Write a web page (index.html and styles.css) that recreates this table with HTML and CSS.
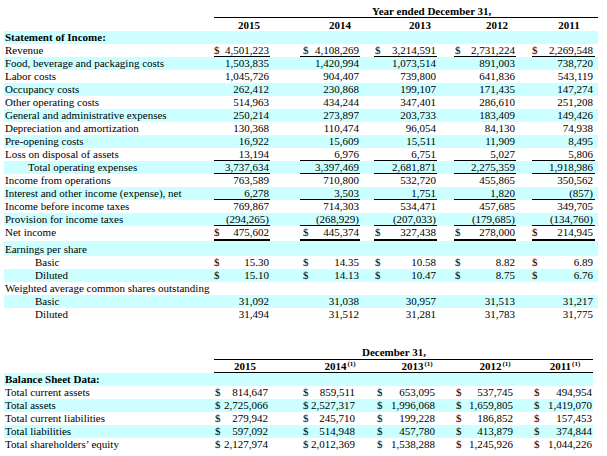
FILE: index.html
```html
<!DOCTYPE html>
<html lang="en">
<head>
<meta charset="utf-8">
<title>Selected Financial Data</title>
<link rel="stylesheet" href="styles.css">
</head>
<body>
<div class="page">
  <section class="t1">
    <div class="hrow title"><div></div><div class="hx">Year ended December 31,</div></div>
    <div class="hrow years"><div></div>
      <div class="hy">
        <div class="y1">2015</div><div class="y2">2014</div><div class="y3">2013</div><div class="y4">2012</div><div class="y5">2011</div>
      </div>
    </div>
    <div class="row alt"><div class="lbl b">Statement of Income:</div></div>
    <div class="row u"><div class="lbl">Revenue</div>
      <div class="v c1"><span>$</span><span>4,501,223</span></div>
      <div class="v c2"><span>$</span><span>4,108,269</span></div>
      <div class="v c3"><span>$</span><span>3,214,591</span></div>
      <div class="v c4"><span>$</span><span>2,731,224</span></div>
      <div class="v c5"><span>$</span><span>2,269,548</span></div>
    </div>
    <div class="row alt"><div class="lbl">Food, beverage and packaging costs</div>
      <div class="v c1"><span></span><span>1,503,835</span></div>
      <div class="v c2"><span></span><span>1,420,994</span></div>
      <div class="v c3"><span></span><span>1,073,514</span></div>
      <div class="v c4"><span></span><span>891,003</span></div>
      <div class="v c5"><span></span><span>738,720</span></div>
    </div>
    <div class="row"><div class="lbl">Labor costs</div>
      <div class="v c1"><span></span><span>1,045,726</span></div>
      <div class="v c2"><span></span><span>904,407</span></div>
      <div class="v c3"><span></span><span>739,800</span></div>
      <div class="v c4"><span></span><span>641,836</span></div>
      <div class="v c5"><span></span><span>543,119</span></div>
    </div>
    <div class="row alt"><div class="lbl">Occupancy costs</div>
      <div class="v c1"><span></span><span>262,412</span></div>
      <div class="v c2"><span></span><span>230,868</span></div>
      <div class="v c3"><span></span><span>199,107</span></div>
      <div class="v c4"><span></span><span>171,435</span></div>
      <div class="v c5"><span></span><span>147,274</span></div>
    </div>
    <div class="row"><div class="lbl">Other operating costs</div>
      <div class="v c1"><span></span><span>514,963</span></div>
      <div class="v c2"><span></span><span>434,244</span></div>
      <div class="v c3"><span></span><span>347,401</span></div>
      <div class="v c4"><span></span><span>286,610</span></div>
      <div class="v c5"><span></span><span>251,208</span></div>
    </div>
    <div class="row alt"><div class="lbl">General and administrative expenses</div>
      <div class="v c1"><span></span><span>250,214</span></div>
      <div class="v c2"><span></span><span>273,897</span></div>
      <div class="v c3"><span></span><span>203,733</span></div>
      <div class="v c4"><span></span><span>183,409</span></div>
      <div class="v c5"><span></span><span>149,426</span></div>
    </div>
    <div class="row"><div class="lbl">Depreciation and amortization</div>
      <div class="v c1"><span></span><span>130,368</span></div>
      <div class="v c2"><span></span><span>110,474</span></div>
      <div class="v c3"><span></span><span>96,054</span></div>
      <div class="v c4"><span></span><span>84,130</span></div>
      <div class="v c5"><span></span><span>74,938</span></div>
    </div>
    <div class="row alt"><div class="lbl">Pre-opening costs</div>
      <div class="v c1"><span></span><span>16,922</span></div>
      <div class="v c2"><span></span><span>15,609</span></div>
      <div class="v c3"><span></span><span>15,511</span></div>
      <div class="v c4"><span></span><span>11,909</span></div>
      <div class="v c5"><span></span><span>8,495</span></div>
    </div>
    <div class="row u"><div class="lbl">Loss on disposal of assets</div>
      <div class="v c1"><span></span><span>13,194</span></div>
      <div class="v c2"><span></span><span>6,976</span></div>
      <div class="v c3"><span></span><span>6,751</span></div>
      <div class="v c4"><span></span><span>5,027</span></div>
      <div class="v c5"><span></span><span>5,806</span></div>
    </div>
    <div class="row alt u"><div class="lbl ind1">Total operating expenses</div>
      <div class="v c1"><span></span><span>3,737,634</span></div>
      <div class="v c2"><span></span><span>3,397,469</span></div>
      <div class="v c3"><span></span><span>2,681,871</span></div>
      <div class="v c4"><span></span><span>2,275,359</span></div>
      <div class="v c5"><span></span><span>1,918,986</span></div>
    </div>
    <div class="row"><div class="lbl">Income from operations</div>
      <div class="v c1"><span></span><span>763,589</span></div>
      <div class="v c2"><span></span><span>710,800</span></div>
      <div class="v c3"><span></span><span>532,720</span></div>
      <div class="v c4"><span></span><span>455,865</span></div>
      <div class="v c5"><span></span><span>350,562</span></div>
    </div>
    <div class="row alt u"><div class="lbl">Interest and other income (expense), net</div>
      <div class="v c1"><span></span><span>6,278</span></div>
      <div class="v c2"><span></span><span>3,503</span></div>
      <div class="v c3"><span></span><span>1,751</span></div>
      <div class="v c4"><span></span><span>1,820</span></div>
      <div class="v c5"><span></span><span>(857)</span></div>
    </div>
    <div class="row"><div class="lbl">Income before income taxes</div>
      <div class="v c1"><span></span><span>769,867</span></div>
      <div class="v c2"><span></span><span>714,303</span></div>
      <div class="v c3"><span></span><span>534,471</span></div>
      <div class="v c4"><span></span><span>457,685</span></div>
      <div class="v c5"><span></span><span>349,705</span></div>
    </div>
    <div class="row alt u"><div class="lbl">Provision for income taxes</div>
      <div class="v c1"><span></span><span>(294,265)</span></div>
      <div class="v c2"><span></span><span>(268,929)</span></div>
      <div class="v c3"><span></span><span>(207,033)</span></div>
      <div class="v c4"><span></span><span>(179,685)</span></div>
      <div class="v c5"><span></span><span>(134,760)</span></div>
    </div>
    <div class="row net"><div class="lbl">Net income</div>
      <div class="v c1"><span>$</span><span>475,602</span></div>
      <div class="v c2"><span>$</span><span>445,374</span></div>
      <div class="v c3"><span>$</span><span>327,438</span></div>
      <div class="v c4"><span>$</span><span>278,000</span></div>
      <div class="v c5"><span>$</span><span>214,945</span></div>
    </div>
    <div class="row alt eps"><div class="lbl">Earnings per share</div></div>
    <div class="row"><div class="lbl ind2">Basic</div>
      <div class="v c1"><span>$</span><span>15.30</span></div>
      <div class="v c2"><span>$</span><span>14.35</span></div>
      <div class="v c3"><span>$</span><span>10.58</span></div>
      <div class="v c4"><span>$</span><span>8.82</span></div>
      <div class="v c5"><span>$</span><span>6.89</span></div>
    </div>
    <div class="row alt"><div class="lbl ind2">Diluted</div>
      <div class="v c1"><span>$</span><span>15.10</span></div>
      <div class="v c2"><span>$</span><span>14.13</span></div>
      <div class="v c3"><span>$</span><span>10.47</span></div>
      <div class="v c4"><span>$</span><span>8.75</span></div>
      <div class="v c5"><span>$</span><span>6.76</span></div>
    </div>
    <div class="row"><div class="lbl">Weighted average common shares outstanding</div></div>
    <div class="row alt"><div class="lbl ind2">Basic</div>
      <div class="v c1"><span></span><span>31,092</span></div>
      <div class="v c2"><span></span><span>31,038</span></div>
      <div class="v c3"><span></span><span>30,957</span></div>
      <div class="v c4"><span></span><span>31,513</span></div>
      <div class="v c5"><span></span><span>31,217</span></div>
    </div>
    <div class="row"><div class="lbl ind2">Diluted</div>
      <div class="v c1"><span></span><span>31,494</span></div>
      <div class="v c2"><span></span><span>31,512</span></div>
      <div class="v c3"><span></span><span>31,281</span></div>
      <div class="v c4"><span></span><span>31,783</span></div>
      <div class="v c5"><span></span><span>31,775</span></div>
    </div>
  </section>

  <section class="t2">
    <div class="hrow title"><div></div><div class="hx">December 31,</div></div>
    <div class="hrow years"><div></div>
      <div class="hy">
        <div class="y1">2015</div>
        <div class="y2">2014<sup>(1)</sup></div>
        <div class="y3">2013<sup>(1)</sup></div>
        <div class="y4">2012<sup>(1)</sup></div>
        <div class="y5">2011<sup>(1)</sup></div>
      </div>
    </div>
    <div class="row alt"><div class="lbl b">Balance Sheet Data:</div></div>
    <div class="row"><div class="lbl">Total current assets</div>
      <div class="v c1"><span>$</span><span>814,647</span></div>
      <div class="v c2"><span>$</span><span>859,511</span></div>
      <div class="v c3"><span>$</span><span>653,095</span></div>
      <div class="v c4"><span>$</span><span>537,745</span></div>
      <div class="v c5"><span>$</span><span>494,954</span></div>
    </div>
    <div class="row alt"><div class="lbl">Total assets</div>
      <div class="v c1"><span>$</span><span>2,725,066</span></div>
      <div class="v c2"><span>$</span><span>2,527,317</span></div>
      <div class="v c3"><span>$</span><span>1,996,068</span></div>
      <div class="v c4"><span>$</span><span>1,659,805</span></div>
      <div class="v c5"><span>$</span><span>1,419,070</span></div>
    </div>
    <div class="row"><div class="lbl">Total current liabilities</div>
      <div class="v c1"><span>$</span><span>279,942</span></div>
      <div class="v c2"><span>$</span><span>245,710</span></div>
      <div class="v c3"><span>$</span><span>199,228</span></div>
      <div class="v c4"><span>$</span><span>186,852</span></div>
      <div class="v c5"><span>$</span><span>157,453</span></div>
    </div>
    <div class="row alt"><div class="lbl">Total liabilities</div>
      <div class="v c1"><span>$</span><span>597,092</span></div>
      <div class="v c2"><span>$</span><span>514,948</span></div>
      <div class="v c3"><span>$</span><span>457,780</span></div>
      <div class="v c4"><span>$</span><span>413,879</span></div>
      <div class="v c5"><span>$</span><span>374,844</span></div>
    </div>
    <div class="row"><div class="lbl">Total shareholders’ equity</div>
      <div class="v c1"><span>$</span><span>2,127,974</span></div>
      <div class="v c2"><span>$</span><span>2,012,369</span></div>
      <div class="v c3"><span>$</span><span>1,538,288</span></div>
      <div class="v c4"><span>$</span><span>1,245,926</span></div>
      <div class="v c5"><span>$</span><span>1,044,226</span></div>
    </div>
  </section>
</div>
</body>
</html>
```

FILE: styles.css
```css
html, body {
  margin: 0;
  padding: 0;
  background: #ffffff;
}

body {
  font-family: "Liberation Serif", "Times New Roman", serif;
  font-size: 11px;
  color: #000000;
}

.page {
  padding-left: 4px;
}

.t1 {
  width: 594px;
}

.t2 {
  width: 589px;
  margin-top: 23px;
}

/* header rows */
.hrow {
  display: grid;
  grid-template-columns: 210px 1fr;
}

.hx {
  font-weight: bold;
  line-height: 13px;
  border-bottom: 1px solid #000000;
  white-space: nowrap;
}

.t1 .hx {
  padding: 6px 0 0 158px;
  line-height: 11px;
}

.t2 .hx {
  padding: 2px 0 0 148px;
}

.hy {
  display: grid;
  font-weight: bold;
  text-align: center;
  line-height: 13px;
  height: 13px;
  white-space: nowrap;
  box-sizing: border-box;
}

.t1 .hy {
  grid-template-columns: 8px 54px 37px 54px 26px 54px 23px 54px 18px 54px;
  padding-top: 1px;
  line-height: 12px;
}

.t2 .hy {
  grid-template-columns: 4px 54px 41px 54px 23px 54px 24px 54px 16px 54px;
  line-height: 12px;
  border-bottom: 1px solid #000000;
}

.y1 { grid-column: 2; }
.y2 { grid-column: 4; }
.y3 { grid-column: 6; }
.y4 { grid-column: 8; }
.y5 { grid-column: 10; }

sup {
  font-size: 7px;
  line-height: 0;
  vertical-align: 4px;
  margin-left: 1px;
}

/* data rows */
.row {
  display: grid;
  height: 13px;
  line-height: 13px;
}

.t1 .row {
  grid-template-columns: 210px 56px 30px 60px 14px 63px 17px 62px 16px 63px 3px;
}

.t2 .row {
  grid-template-columns: 210px 56px 32px 54px 21px 59px 20px 58px 20px 59px;
}

.alt {
  background: #ccffff;
}

.lbl {
  grid-column: 1;
  padding-left: 1px;
  white-space: nowrap;
}

.b {
  font-weight: bold;
}

.ind1 {
  padding-left: 24px;
}

.ind2 {
  padding-left: 31px;
}

.v {
  display: flex;
  justify-content: space-between;
  padding-right: 1px;
  box-sizing: border-box;
  white-space: nowrap;
}

.c1 { grid-column: 2; }
.c2 { grid-column: 4; }
.c3 { grid-column: 6; }
.c4 { grid-column: 8; }
.c5 { grid-column: 10; }

.t1 .c2 { padding-left: 3px; }
.t1 .c3, .t1 .c4 { padding-left: 1px; }
.t1 .c5 { padding-right: 2px; }

.t2 .c1 { padding-left: 1px; padding-right: 2px; }
.t2 .c2 { padding-left: 1px; }

.u .v {
  border-bottom: 1px solid #000000;
  line-height: 12px;
}

.net {
  height: 15px;
}

.net .v {
  border-bottom: 2px solid #000000;
}

.eps {
  height: 15px;
}

.eps .lbl {
  padding-top: 2px;
  line-height: 13px;
}
```
